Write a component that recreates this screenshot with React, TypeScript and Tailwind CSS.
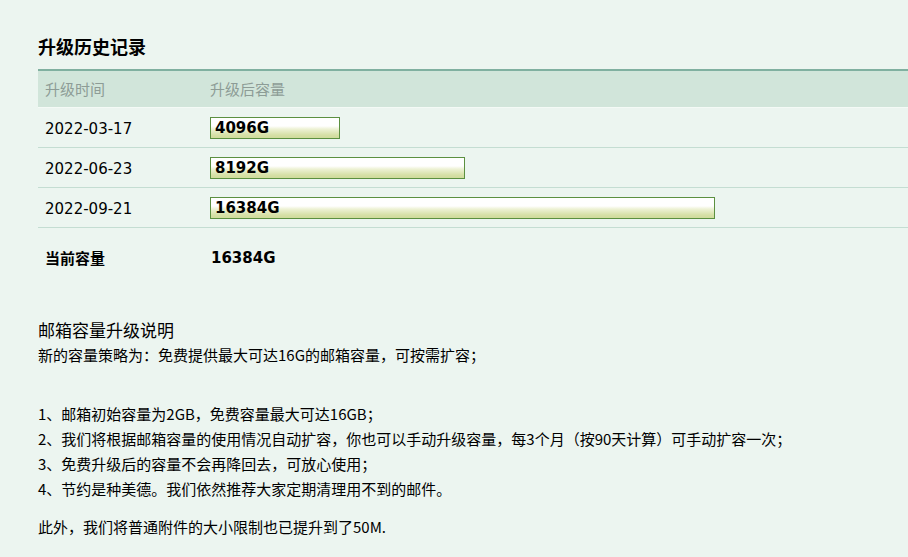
import React from "react";

const history = [
  { date: "2022-03-17", size: 4096 },
  { date: "2022-06-23", size: 8192 },
  { date: "2022-09-21", size: 16384 },
];

const maxSize = 16384;

const notes = [
  "1、邮箱初始容量为2GB，免费容量最大可达16GB；",
  "2、我们将根据邮箱容量的使用情况自动扩容，你也可以手动升级容量，每3个月（按90天计算）可手动扩容一次；",
  "3、免费升级后的容量不会再降回去，可放心使用；",
  "4、节约是种美德。我们依然推荐大家定期清理用不到的邮件。",
];

const cjk = "font-['Noto_Sans_CJK_SC',sans-serif]";
const latin = "font-['DejaVu_Sans','Noto_Sans_CJK_SC',sans-serif]";

export default function App() {
  return (
    <div className={`min-h-[557px] w-full overflow-hidden bg-[#ecf5f0] pl-[38px] pt-[34px] text-black ${cjk}`}>
      <h2 className="text-[18px] font-bold leading-[24px]">升级历史记录</h2>

      <div className="mt-[11px] border-t-2 border-[#80b0a0]">
        <div className="grid h-[37px] grid-cols-[172px_1fr] items-center border-b border-[#f4faf6] bg-[#d1e5da] pt-[1px] text-[15px] text-[#8d9c96]">
          <div className="pl-[7px]">升级时间</div>
          <div>升级后容量</div>
        </div>

        {history.map((item) => (
          <div
            key={item.date}
            className="grid h-[40px] grid-cols-[172px_1fr] items-center border-b border-[#c4ddd2]"
          >
            <div className={`pl-[7px] pt-[3px] text-[15px] ${latin}`}>{item.date}</div>
            <div>
              <div
                className="flex h-[22px] items-end border border-[#5c9040] bg-[linear-gradient(to_bottom,#ffffff_0%,#ffffff_40%,#eef2d6_55%,#d6e0a6_85%,#d0dc9c_100%)] pl-[4px]"
                style={{ width: 5 + (500 * item.size) / maxSize }}
              >
                <span className={`text-[15px] font-bold leading-[20px] ${latin}`}>{item.size}G</span>
              </div>
            </div>
          </div>
        ))}

        <div className="grid h-[60px] grid-cols-[172px_1fr] items-center">
          <div className="pl-[7px] text-[15px] font-bold">当前容量</div>
          <div className={`pl-[1px] text-[15px] font-bold ${latin}`}>16384G</div>
        </div>
      </div>

      <div className="mt-[29px]">
        <h3 className="text-[17px] font-normal leading-[25px]">邮箱容量升级说明</h3>
        <p className="text-[15px] leading-[25px]">新的容量策略为：免费提供最大可达16G的邮箱容量，可按需扩容；</p>

        <ul className="mt-[34px] text-[15px] leading-[25px]">
          {notes.map((n) => (
            <li key={n}>{n}</li>
          ))}
        </ul>

        <p className="mt-[13px] text-[15px] leading-[25px]">此外，我们将普通附件的大小限制也已提升到了50M.</p>
      </div>
    </div>
  );
}
